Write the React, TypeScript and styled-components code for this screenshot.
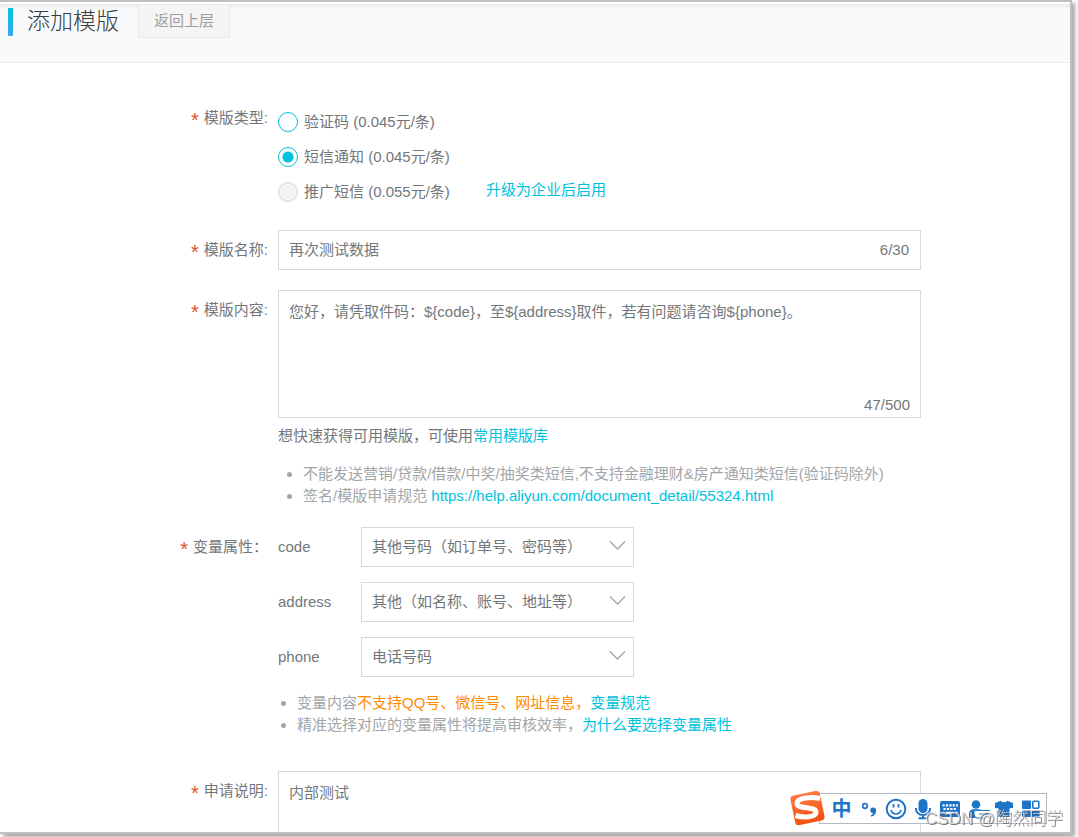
import React from "react";
import styled, { createGlobalStyle, css } from "styled-components";

const color = {
  text: "#73777a",
  muted: "#a2a6a9",
  link: "#00c1de",
  warn: "#ff8a00",
  required: "#e4502f",
  line: "#d7d8d9",
  ime: "#1f74c8",
};

const GlobalStyle = createGlobalStyle`
  *, *::before, *::after { box-sizing: border-box; }
  body {
    margin: 0;
    background: #fff;
    color: ${color.text};
    font: 15px/22px "Liberation Sans", "Noto Sans CJK SC", sans-serif;
  }
  button, input, textarea, select { font: inherit; color: inherit; }
`;

const Screen = styled.div`
  height: 100vh;
  padding: 0 6px 3px 0;
  overflow: hidden;
`;

const Frame = styled.div`
  display: flex;
  flex-direction: column;
  height: 100%;
  overflow: hidden;
  border: solid #bfbfbf;
  border-width: 2px 2px 2px 0;
  box-shadow: 3px 3px 4px rgba(0, 0, 0, 0.35);
`;

const Header = styled.header`
  display: flex;
  align-items: flex-start;
  flex: none;
  height: 61px;
  padding-left: 8px;
  border-top: 2px solid #fff;
  border-bottom: 1px solid #e9edf0;
  background: #f9fafc;
  box-shadow: inset 0 4px 4px -2px #e4e5e6;
`;

const Title = styled.h1`
  display: flex;
  align-items: center;
  gap: 14px;
  margin: 0 19px 0 0;
  color: #373d41;
  font-size: 23px;
  font-weight: 300;
  line-height: 34px;

  &::before {
    content: "";
    width: 5px;
    height: 28px;
    border-radius: 1px;
    background: linear-gradient(#00c1de, #37a7f7);
    margin-top: 2px;
  }
`;

const BackButton = styled.button`
  height: 34px;
  padding: 0 15px;
  border: 1px solid #e8e9ea;
  border-top-color: transparent;
  background: #f5f5f5;
  background-clip: padding-box;
  color: #9b9ea0;
  line-height: 32px;
`;

const Form = styled.form`
  display: flex;
  flex-direction: column;
  gap: 20px;
  padding: 42px 149px 0 0;
`;

const Row = styled.div<{ $spaced?: boolean }>`
  display: grid;
  grid-template-columns: 268px minmax(0, 1fr);
  column-gap: 10px;
  padding-bottom: ${(p) => (p.$spaced ? 15 : 0)}px;
`;

const labelStyle = css<{ $top?: number }>`
  display: flex;
  justify-content: flex-end;
  align-items: flex-start;
  gap: 5px;
  padding-top: ${(p) => p.$top ?? 9}px;

  &::before {
    content: "*";
    padding-top: 2px;
    color: ${color.required};
    font-size: 20px;
  }
`;

const Label = styled.label<{ $top?: number }>`
  ${labelStyle}
`;

const GroupLabel = styled.div<{ $top?: number }>`
  ${labelStyle}
`;

const RadioLine = styled.div`
  display: flex;
  align-items: flex-start;
  gap: 36px;
  height: 35px;
  padding-top: 6px;
`;

const RadioLabel = styled.label`
  display: flex;
  align-items: center;
  gap: 6px;
`;

const Radio = styled.input`
  appearance: none;
  width: 20px;
  height: 20px;
  margin: 0;
  border: 1px solid ${color.link};
  border-radius: 50%;
  background: #fff;

  &:checked {
    background: radial-gradient(circle, ${color.link} 5px, #fff 6px);
  }
  &:disabled {
    border-color: ${color.line};
    background: #f4f4f4;
  }
`;

const Link = styled.a`
  color: ${color.link};
  text-decoration: none;

  ${RadioLine} > & {
    line-height: 18px;
  }
`;

const InputBox = styled.div`
  display: flex;
  align-items: center;
  height: 40px;
  padding: 0 11px 0 10px;
  border: 1px solid ${color.line};
`;

const TextInput = styled.input`
  flex: 1;
  min-width: 0;
  padding: 0;
  border: 0;
  outline: 0;
  background: none;
`;

const AreaBox = styled.div`
  display: flex;
  flex-direction: column;
  height: 128px;
  padding: 10px 10px 1px;
  border: 1px solid ${color.line};
`;

const TextArea = styled.textarea`
  flex: 1;
  padding: 0;
  border: 0;
  outline: 0;
  resize: none;
  background: none;
`;

const Counter = styled.span`
  align-self: flex-end;

  ${InputBox} & {
    align-self: center;
  }
`;

const Hint = styled.p`
  margin: 7px 0 16px;
`;

const Notes = styled.ul<{ $indent: number }>`
  margin: 0;
  padding: 0 0 0 ${(p) => p.$indent}px;
  color: ${color.muted};
  list-style: none;
`;

const Note = styled.li`
  display: flex;
  align-items: center;
  gap: 11px;
  white-space: nowrap;

  &::before {
    content: "";
    flex: none;
    width: 5px;
    height: 5px;
    border-radius: 50%;
    background: ${color.muted};
  }
`;

const Warning = styled.span`
  color: ${color.warn};
`;

const Variables = styled.div`
  display: grid;
  gap: 15px;
  margin-bottom: 15px;
`;

const Variable = styled.div`
  display: grid;
  grid-template-columns: 83px 273px;
  align-items: center;
`;

const SelectBox = styled.div`
  position: relative;

  svg {
    position: absolute;
    top: 13px;
    right: 8px;
    pointer-events: none;
  }
`;

const Select = styled.select`
  display: block;
  appearance: none;
  width: 100%;
  height: 40px;
  padding: 0 32px 0 10px;
  border: 1px solid ${color.line};
  border-radius: 0;
  background: #fff;
`;

const ImeBar = styled.div`
  position: fixed;
  right: 31px;
  bottom: 13px;
  display: flex;
  align-items: center;
  height: 31px;
  padding: 0 2px 0 8px;
  border: 1px solid #b4b7c4;
  background: #fff;
  color: ${color.ime};
`;

const ImeLogo = styled.svg`
  position: absolute;
  left: -32px;
  top: -6px;
`;

const ImeButton = styled.button`
  display: grid;
  place-items: center;
  width: 27px;
  height: 29px;
  padding: 0;
  border: 0;
  background: none;
  color: inherit;
  font-size: 20px;
  font-weight: 700;
`;

const Watermark = styled.div`
  position: fixed;
  right: 15px;
  bottom: 7px;
  color: rgba(225, 225, 225, 0.8);
  font-size: 17px;
  font-weight: 300;
  text-shadow: 1px 1px 0 rgba(80, 80, 80, 0.75);
  white-space: nowrap;
  pointer-events: none;
`;

const types = [
  { id: "code", text: "验证码 (0.045元/条)" },
  { id: "notice", text: "短信通知 (0.045元/条)", checked: true },
  { id: "promo", text: "推广短信 (0.055元/条)", disabled: true },
];

const variables = [
  { name: "code", value: "其他号码（如订单号、密码等）" },
  { name: "address", value: "其他（如名称、账号、地址等）" },
  { name: "phone", value: "电话号码" },
];

const Chevron = () => (
  <svg width="17" height="11" viewBox="0 0 17 11" fill="none" stroke="#a3a6a8" strokeWidth="1.3">
    <path d="M1 1.5 8.500 9 16 1.500" />
  </svg>
);

const imeIcons = [
  {
    name: "标点",
    art: (
      <svg width="20" height="22" viewBox="0 0 20 22" fill="currentColor">
        <circle cx="6" cy="8" r="2.300" fill="none" stroke="currentColor" strokeWidth="1.700" />
        <path d="M11.300 12.200a2.900 2.900 0 1 1 5.800.2c0 3-1.600 5.300-4.600 6.300l-.7-1.500c1.300-.6 2-1.300 2.200-2.200-1.600.1-2.700-1.100-2.700-2.800z" />
      </svg>
    ),
  },
  {
    name: "表情",
    art: (
      <svg width="22" height="22" viewBox="0 0 22 22" fill="none" stroke="currentColor" strokeWidth="2">
        <circle cx="11" cy="11" r="9.300" />
        <path d="M6 12c.8 2.700 2.600 4 5 4s4.200-1.300 5-4" strokeWidth="1.600" />
        <path d="M8.500 6.200v3.300M13.500 6.200v3.300" />
      </svg>
    ),
  },
  {
    name: "语音",
    art: (
      <svg width="22" height="22" viewBox="0 0 22 22" fill="none" stroke="currentColor" strokeWidth="2">
        <rect x="6.500" y="1" width="9" height="14" rx="4.500" fill="currentColor" stroke="none" />
        <path d="M4 10v1a7 6 0 0 0 14 0v-1M11 17v3M6.500 20.300h9" />
      </svg>
    ),
  },
  {
    name: "键盘",
    art: (
      <svg width="22" height="22" viewBox="0 0 22 22" fill="currentColor">
        <rect x="1" y="3" width="20" height="16" rx="2" />
        <path
          d="M3.500 7.300h2.200m1.200 0h2.200m1.200 0h2.200m1.200 0h2.200m1.200 0h1.700M4.500 11h2.200m1.200 0h2.200m1.200 0h2.200m1.200 0h2.200M3.500 14.800h2.200m1.300 0h8m1.300 0h2.200"
          stroke="#fff"
          strokeWidth="2.200"
        />
      </svg>
    ),
  },
  {
    name: "用户",
    art: (
      <svg width="26" height="22" viewBox="0 0 26 22" fill="currentColor">
        <circle cx="12" cy="6.500" r="4.300" />
        <path d="M5 20v-4c0-3.500 2.300-4.800 5-4.800h4c2.700 0 5 1.300 5 4.800v4z" />
        <path d="M10.500 12H26v8H12l-1.500-4z" fill="#fff" />
        <path d="M10 12.500h16M15 16h10M12 20h7" stroke="currentColor" strokeWidth="1.200" />
      </svg>
    ),
  },
  {
    name: "皮肤",
    art: (
      <svg width="22" height="22" viewBox="0 0 22 22" fill="currentColor">
        <path d="M7.500 2.800c1 1.900 6 1.900 7 0l5.700 2.400-.2 4.800-3.500.3V19h-11v-8.700L2 10l-.2-4.800z" />
      </svg>
    ),
  },
  {
    name: "工具箱",
    art: (
      <svg width="22" height="22" viewBox="0 0 22 22" fill="currentColor">
        <rect x="2" y="2.500" width="9" height="8.500" rx="1" />
        <rect x="12.800" y="3.300" width="6" height="7" rx="1" fill="none" stroke="currentColor" strokeWidth="1.600" />
        <rect x="2" y="12.500" width="9" height="6.500" rx="1" />
        <rect x="12" y="12.500" width="7.600" height="6.500" rx="1" />
      </svg>
    ),
  },
];

export default function App() {
  return (
    <Screen>
      <GlobalStyle />
      <Frame>
        <Header>
          <Title>添加模版</Title>
          <BackButton type="button">返回上层</BackButton>
        </Header>
        <Form>
          <Row role="radiogroup" aria-labelledby="type-label">
            <GroupLabel id="type-label" $top={2}>模版类型:</GroupLabel>
            <div>
              {types.map((t) => (
                <RadioLine key={t.id}>
                  <RadioLabel>
                    <Radio type="radio" name="type" defaultChecked={t.checked} disabled={t.disabled} />
                    {t.text}
                  </RadioLabel>
                  {t.disabled && <Link href="#upgrade">升级为企业后启用</Link>}
                </RadioLine>
              ))}
            </div>
          </Row>
          <Row>
            <Label htmlFor="name">模版名称:</Label>
            <InputBox>
              <TextInput id="name" defaultValue="再次测试数据" />
              <Counter>6/30</Counter>
            </InputBox>
          </Row>
          <Row>
            <Label htmlFor="content">模版内容:</Label>
            <div>
              <AreaBox>
                <TextArea
                  id="content"
                  defaultValue="您好，请凭取件码：${code}，至${address}取件，若有问题请咨询${phone}。"
                />
                <Counter>47/500</Counter>
              </AreaBox>
              <Hint>
                想快速获得可用模版，可使用<Link href="#library">常用模版库</Link>
              </Hint>
              <Notes $indent={9}>
                <Note>不能发送营销/贷款/借款/中奖/抽奖类短信,不支持金融理财&amp;房产通知类短信(验证码除外)</Note>
                <Note>
                  <span>
                    签名/模版申请规范{" "}
                    <Link href="https://help.aliyun.com/document_detail/55324.html">
                      https://help.aliyun.com/document_detail/55324.html
                    </Link>
                  </span>
                </Note>
              </Notes>
            </div>
          </Row>
          <Row $spaced>
            <GroupLabel>变量属性：</GroupLabel>
            <div>
              <Variables>
                {variables.map((v) => (
                  <Variable key={v.name}>
                    <label htmlFor={`var-${v.name}`}>{v.name}</label>
                    <SelectBox>
                      <Select id={`var-${v.name}`}>
                        <option>{v.value}</option>
                      </Select>
                      <Chevron />
                    </SelectBox>
                  </Variable>
                ))}
              </Variables>
              <Notes $indent={3}>
                <Note>
                  <span>
                    变量内容<Warning>不支持QQ号、微信号、网址信息，</Warning>
                    <Link href="#rules">变量规范</Link>
                  </span>
                </Note>
                <Note>
                  <span>
                    精准选择对应的变量属性将提高审核效率，<Link href="#why">为什么要选择变量属性</Link>
                  </span>
                </Note>
              </Notes>
            </div>
          </Row>
          <Row>
            <Label htmlFor="remark">申请说明:</Label>
            <AreaBox>
              <TextArea id="remark" defaultValue="内部测试" />
            </AreaBox>
          </Row>
        </Form>
      </Frame>
      <ImeBar>
        <ImeLogo width="40" height="40" viewBox="0 0 40 40" aria-hidden="true">
          <defs>
            <linearGradient id="sogou" x1="0" y1="0" x2="0" y2="1">
              <stop offset="0" stopColor="#ff7a45" />
              <stop offset="1" stopColor="#f4500f" />
            </linearGradient>
          </defs>
          <rect x="4.500" y="5" width="30" height="30" rx="4" fill="url(#sogou)" transform="rotate(-12 19.500 20)" />
          <path
            d="M32 10.500C24 8.500 9 9.500 9 15.500c0 6 19 2.500 19 8.500 0 5.500-12 6-20.500 3.500"
            fill="none"
            stroke="#fff"
            strokeWidth="5"
          />
        </ImeLogo>
        <ImeButton type="button">中</ImeButton>
        {imeIcons.map((i) => (
          <ImeButton key={i.name} type="button" aria-label={i.name}>
            {i.art}
          </ImeButton>
        ))}
      </ImeBar>
      <Watermark>CSDN @陶然同学</Watermark>
    </Screen>
  );
}
